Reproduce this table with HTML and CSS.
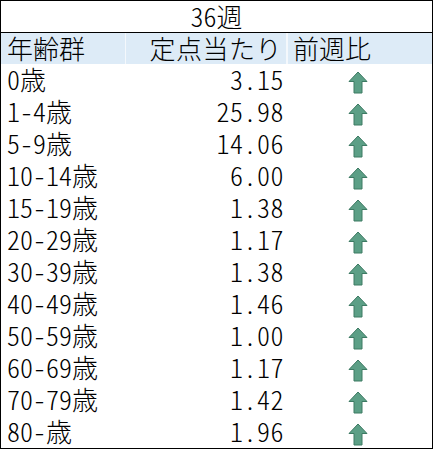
FILE: index.html
```html
<!DOCTYPE html>
<html lang="ja">
<head>
<meta charset="utf-8">
<link rel="stylesheet" href="styles.css">
</head>
<body>
<div class="sheet">
  <div class="title">36週</div>
  <div class="grid">
    <div class="hd c1">年齢群</div>
    <div class="hd c2">定点当たり</div>
    <div class="hd c3">前週比</div>
  </div>
  <div class="grid rows" id="rows"></div>
</div>
<template id="arrow">
  <svg class="arrow" width="20" height="23" viewBox="0 0 20 23"><path d="M10 1 L19 10.5 L14 10.5 L14 22 L6 22 L6 10.5 L1 10.5 Z" fill="#5c9f86" stroke="#3d7a63" stroke-width="1" stroke-linejoin="miter"/></svg>
</template>
<script>
const data=[["0歳","3.15"],["1-4歳","25.98"],["5-9歳","14.06"],["10-14歳","6.00"],["15-19歳","1.38"],["20-29歳","1.17"],["30-39歳","1.38"],["40-49歳","1.46"],["50-59歳","1.00"],["60-69歳","1.17"],["70-79歳","1.42"],["80-歳","1.96"]];
const rows=document.getElementById('rows');
const tpl=document.getElementById('arrow');
for(const [a,v] of data){
  const c1=document.createElement('div');c1.className='cell c1';c1.textContent=a;
  const c2=document.createElement('div');c2.className='cell c2 num';c2.textContent=v;
  const c3=document.createElement('div');c3.className='cell c3 ic';c3.appendChild(tpl.content.cloneNode(true));
  rows.append(c1,c2,c3);
}
</script>
</body>
</html>
```
FILE: styles.css
```css
html, body {
  margin: 0;
  padding: 0;
  background: #fff;
}
.sheet {
  width: 431px;
  border: 1px solid #000;
  font-family: "Noto Sans CJK JP", "Noto Sans", sans-serif;
  font-size: 26px;
  font-weight: 300;
  color: #000;
  font-feature-settings: "hwid" 1;
}
.title {
  height: 31px;
  line-height: 29px;
  text-align: center;
  border-bottom: 1px solid #000;
}
.grid {
  display: grid;
  grid-template-columns: 124px 163px 1fr;
}
.hd {
  height: 31px;
  line-height: 29px;
  background: #ddebf7;
  white-space: nowrap;
}
.hd.c2 {
  border-left: 1px solid #f4f8fc;
  border-right: 2px solid #f4f8fc;
  letter-spacing: 0.5px;
}
.cell {
  height: 32px;
  line-height: 29px;
  white-space: nowrap;
}
.c1 { padding-left: 6px; }
.c2 { text-align: right; padding-right: 4px; }
.c3 { padding-left: 5px; }
.num { letter-spacing: 0.5px; }
.ic {
  padding-left: 0;
  display: flex;
  justify-content: center;
  align-items: flex-start;
}
.arrow {
  margin-top: 7px;
  margin-left: -4px;
}
```
